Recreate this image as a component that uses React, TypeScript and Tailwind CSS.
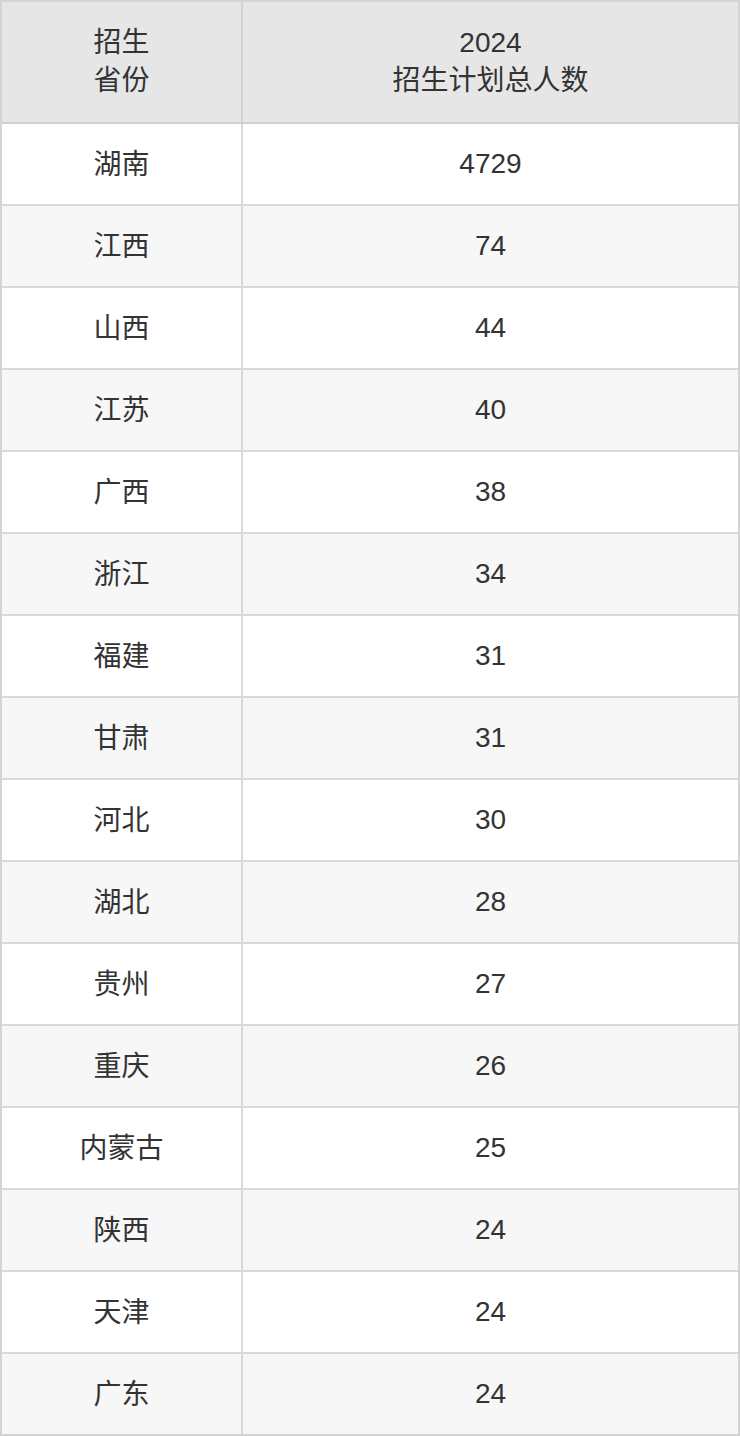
const rows: [string, string][] = [
  ['湖南', '4729'],
  ['江西', '74'],
  ['山西', '44'],
  ['江苏', '40'],
  ['广西', '38'],
  ['浙江', '34'],
  ['福建', '31'],
  ['甘肃', '31'],
  ['河北', '30'],
  ['湖北', '28'],
  ['贵州', '27'],
  ['重庆', '26'],
  ['内蒙古', '25'],
  ['陕西', '24'],
  ['天津', '24'],
  ['广东', '24'],
]

export default function App() {
  return (
    <div
      className="w-[740px] bg-white text-[#333] text-[28px]"
      style={{ fontFamily: '"Liberation Sans", "Noto Sans CJK SC", sans-serif' }}
    >
      <div className="border-2 border-[#d4d4d4]">
        {/* header */}
        <div className="grid grid-cols-[241px_1fr] bg-[#e6e6e6] border-b-2 border-[#cfcfcf]">
          <div className="h-[120px] flex flex-col items-center justify-center leading-[38px] border-r-2 border-[#d4d4d4]">
            <span>招生</span>
            <span>省份</span>
          </div>
          <div className="h-[120px] flex flex-col items-center justify-center leading-[38px]">
            <span>2024</span>
            <span>招生计划总人数</span>
          </div>
        </div>

        {rows.map(([prov, num], i) => (
          <div
            key={i}
            className={`grid grid-cols-[241px_1fr] ${i % 2 === 0 ? 'bg-white' : 'bg-[#f7f7f7]'} ${i < rows.length - 1 ? 'border-b-2 border-[#d9d9d9]' : ''}`}
          >
            <div className="h-[80px] pt-px flex items-center justify-center border-r-2 border-[#d9d9d9]">{prov}</div>
            <div className="h-[80px] flex items-center justify-center">{num}</div>
          </div>
        ))}
      </div>
    </div>
  )
}
